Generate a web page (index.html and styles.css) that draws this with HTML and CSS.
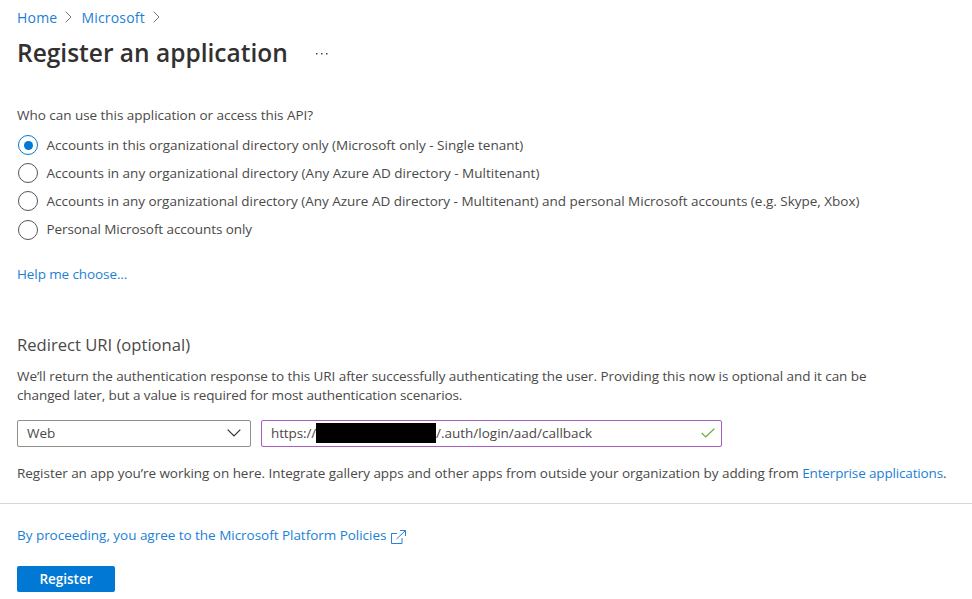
FILE: index.html
```html
<!DOCTYPE html>
<html lang="en">
<head>
<meta charset="utf-8">
<title>Register an application</title>
<link rel="stylesheet" href="styles.css">
</head>
<body>
<main class="page">
  <nav class="crumbs">
    <a class="link home" href="#">Home</a>
    <svg class="sep" viewBox="0 0 7 12"><path d="M.7.7 6 6 .7 11.3"/></svg>
    <a class="link ms" href="#">Microsoft</a>
    <svg class="sep" viewBox="0 0 7 12"><path d="M.7.7 6 6 .7 11.3"/></svg>
  </nav>
  <header class="title-row">
    <h1 class="title">Register an application</h1>
    <svg class="more" viewBox="0 0 14 2"><path d="M1 0h1.5v1.5H1zM6 0h1.5v1.5H6zM11 0h1.5v1.5H11z"/></svg>
  </header>
  <section class="accounts">
    <p class="question"><span class="t-question">Who can use this application or access this API?</span></p>
    <div class="option"><span class="radio checked"></span><span class="t-o1">Accounts in this organizational directory only (Microsoft only - Single tenant)</span></div>
    <div class="option"><span class="radio"></span><span class="t-o2">Accounts in any organizational directory (Any Azure AD directory - Multitenant)</span></div>
    <div class="option"><span class="radio"></span><span class="t-o3">Accounts in any organizational directory (Any Azure AD directory - Multitenant) and personal Microsoft accounts (e.g. Skype, Xbox)</span></div>
    <div class="option"><span class="radio"></span><span class="t-o4">Personal Microsoft accounts only</span></div>
    <a class="link help" href="#">Help me choose...</a>
  </section>
  <section class="redirect">
    <h2 class="subtitle">Redirect URI (optional)</h2>
    <p class="description"><span class="t-d1">We’ll return the authentication response to this URI after successfully authenticating the user. Providing this now is optional and it can be</span><br><span class="t-d2">changed later, but a value is required for most authentication scenarios.</span></p>
    <div class="fields">
      <div class="field select"><span>Web</span><svg class="chevron" viewBox="0 0 14 8"><path d="M.7.7 7 7l6.300-6.300"/></svg></div>
      <div class="field uri"><span class="scheme">https://</span><span class="redacted"></span><span class="path">/.auth/login/aad/callback</span><svg class="check" viewBox="0 0 14 10"><path d="m.7 5 4 4 8.600-8.300"/></svg></div>
    </div>
    <p class="note"><span class="t-note">Register an app you’re working on here. Integrate gallery apps and other apps from outside your organization by adding from <a class="link enterprise" href="#">Enterprise applications</a>.</span></p>
  </section>
</main>
<footer class="footer">
  <a class="link policy" href="#"><span class="t-policy">By proceeding, you agree to the Microsoft Platform Policies</span><svg class="external" viewBox="0 0 15 14"><path d="M6 3.500H.5v10H11V8M9 .5h5.500V6M14.200.8 5.500 9"/></svg></a>
  <button class="register">Register</button>
</footer>
</body>
</html>
```

FILE: styles.css
```css
* { box-sizing: border-box; }
body { margin: 0; background: #fff; color: #4a4948; font: 13.5px/19px "Open Sans", "Noto Sans", sans-serif; white-space: nowrap; overflow: hidden; }
p, h1, h2 { margin: 0; }
svg { fill: none; stroke-width: 1; flex: none; }
.link { color: #1c7fd6; text-decoration: none; }
.page { height: 504px; padding: 7px 17px 0; border-bottom: 1px solid #d6d6d6; }
.crumbs { display: flex; align-items: center; height: 20px; font-size: 14px; letter-spacing: 0.2px; }
.sep { width: 7px; height: 12px; stroke: #777; margin: 0 9px 0 8px; }
.title-row { display: flex; align-items: center; height: 52px; }
.title { color: #323130; font-size: 24.5px; line-height: 36px; font-weight: 600; width: 298px; }
.more { width: 14px; height: 2px; fill: #444; margin-top: 1px; }
.question { margin-top: 27px; height: 25px; }
.t-question { letter-spacing: -0.03px; }
.option { display: flex; align-items: center; height: 28.200px; }
.radio { width: 20px; height: 20px; margin: 0 8.500px 0 1px; border: 1px solid #555; border-radius: 50%; display: grid; place-items: center; flex: none; }
.checked { border-color: #0078d4; }
.checked::after { content: ""; width: 9px; height: 9px; border-radius: 50%; background: #0078d4; }
.t-o3 { letter-spacing: -0.01px; }
.t-o4 { letter-spacing: -0.08px; }
.help { display: block; margin-top: 21px; width: max-content; letter-spacing: -0.1px; }
.subtitle { font-size: 16.6px; line-height: 24px; font-weight: 400; margin-top: 49px; }
.description { margin-top: 10px; }
.t-d1 { letter-spacing: -0.07px; }
.t-d2 { letter-spacing: -0.1px; }
.fields { display: flex; gap: 10px; margin-top: 15px; }
.field { display: flex; align-items: center; height: 27px; border: 1px solid #8f8e8d; border-radius: 2px; padding: 0 9px; }
.select { width: 234px; justify-content: space-between; }
.chevron { width: 14px; height: 8px; stroke: #323130; stroke-width: 1.2; }
.uri { width: 461px; border-color: #a45dc0; padding-right: 6px; }
.scheme { width: 45px; letter-spacing: -0.12px; }
.redacted { width: 120px; height: 20px; margin-bottom: 1px; background: #000; }
.check { width: 14px; height: 10px; stroke: #6bb030; stroke-width: 1.2; margin-left: auto; }
.note { margin-top: 17px; }
.t-note { letter-spacing: -0.04px; }
.enterprise { letter-spacing: -0.15px; }
.footer { padding: 21px 17px 0; }
.policy { display: flex; align-items: center; height: 20px; width: max-content; }
.t-policy { letter-spacing: -0.03px; }
.external { width: 15px; height: 14px; stroke: #2d7fdc; margin-left: 5px; margin-top: 4px; }
.register { display: block; width: 98px; height: 26px; margin-top: 21px; padding: 0; border: 0; border-radius: 2px; background: #0078d4; color: #fff; font: 600 13.5px/26px "Open Sans", sans-serif; }
```
